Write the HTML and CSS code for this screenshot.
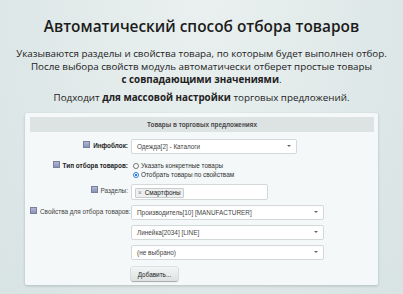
FILE: index.html
```html
<!DOCTYPE html>
<html lang="ru">
<head>
    <meta charset="UTF-8">
    <meta name="viewport" content="width=device-width, initial-scale=1.0">
    <title>Автоматический способ отбора товаров</title>
    <link rel="stylesheet" href="styles.css">
</head>
<body>
    <div class="intro">
        <h1>Автоматический способ отбора товаров</h1>
        <p>Указываются разделы и свойства товара, по которым будет выполнен отбор.<br>
        После выбора свойств модуль автоматически отберет простые товары<br>
        <strong>с совпадающими значениями</strong>.</p>
        <p class="note">Подходит <strong>для массовой настройки</strong> торговых предложений.</p>
    </div>
    <div class="panel">
        <div class="panel-head">Товары в торговых предложениях</div>
        <div class="form">
            <div class="label bold"><span class="mark"></span>Инфоблок:</div>
            <div class="field">
                <div class="select wide">Одежда[2] - Каталоги</div>
            </div>

            <div class="label bold"><span class="mark"></span>Тип отбора товаров:</div>
            <div class="field radios">
                <div class="radio"><span class="dot"></span>Указать конкретные товары</div>
                <div class="radio"><span class="dot on"></span>Отобрать товары по свойствам</div>
            </div>

            <div class="label"><span class="mark"></span>Разделы:</div>
            <div class="field">
                <div class="tags"><span class="tag"><span class="x">×</span>Смартфоны</span></div>
            </div>

            <div class="label"><span class="mark"></span>Свойства для отбора товаров:</div>
            <div class="field stack">
                <div class="select long">Производитель[10] [MANUFACTURER]</div>
                <div class="select long">Линейка[2034] [LINE]</div>
                <div class="select long">(не выбрано)</div>
                <button type="button">Добавить...</button>
            </div>
        </div>
    </div>
</body>
</html>
```

FILE: styles.css
```css
body {
    margin: 0;
    padding: 0;
    height: 294px;
    overflow: hidden;
    font-family: "Open Sans", "Liberation Sans", sans-serif;
    color: #222222;
    background: radial-gradient(ellipse at 50% 0%, #eaf0f0 0%, #dfe8e8 60%, #d8e3e3 100%);
}
.intro {
    text-align: center;
    padding-top: 17px;
}
.intro h1 {
    margin: 0 0 9.5px;
    font-size: 15.4px;
    font-weight: 600;
    line-height: 20px;
    color: #1c1c1c;
}
.intro p {
    margin: 0;
    font-size: 9.8px;
    line-height: 13px;
}
.intro p.note {
    margin-top: 5px;
}
.intro strong {
    font-weight: 700;
}
.panel {
    margin: 9.5px 25px 0;
    width: 353px;
    box-sizing: border-box;
    padding: 4px 4px 4px 5px;
    background: #f4f8f8;
    border-radius: 2px;
    box-shadow: 0 1px 3px rgba(0, 0, 0, 0.18);
    font-family: "Liberation Sans", Arial, sans-serif;
    font-size: 6.4px;
    color: #444444;
}
.panel-head {
    height: 15px;
    line-height: 15px;
    text-align: center;
    background: #dde3e3;
    font-weight: bold;
    color: #4a4a4a;
}
.form {
    display: grid;
    grid-template-columns: 98px 1fr;
    column-gap: 3px;
    row-gap: 5px;
    padding-top: 7px;
}
.label {
    text-align: right;
    padding-top: 1.5px;
    white-space: nowrap;
}
.label.bold {
    font-weight: bold;
    color: #222222;
}
.mark {
    display: inline-block;
    width: 5px;
    height: 5px;
    margin-right: 3px;
    vertical-align: -0.5px;
    background: linear-gradient(#b0b7d3, #8a93b8);
    border: 0.5px solid #77809f;
}
.field {
    min-width: 0;
}
.select {
    position: relative;
    box-sizing: border-box;
    height: 15px;
    line-height: 13px;
    padding: 0 12px 0 5px;
    background: #ffffff;
    border: 1px solid #d3d8d8;
    border-radius: 2px;
    white-space: nowrap;
    overflow: hidden;
}
.select::after {
    content: "";
    position: absolute;
    right: 5px;
    top: 5px;
    border-left: 2px solid transparent;
    border-right: 2px solid transparent;
    border-top: 2px solid #666666;
}
.select.wide {
    width: 166px;
}
.select.long {
    width: 193px;
}
.radios {
    padding-top: 2px;
}
.radio {
    height: 9px;
    line-height: 9px;
    white-space: nowrap;
    color: #333333;
}
.dot {
    display: inline-block;
    box-sizing: border-box;
    width: 6px;
    height: 6px;
    margin: 0 2px 0 2px;
    vertical-align: -0.5px;
    border-radius: 50%;
    border: 1px solid #777777;
    background: #ffffff;
}
.dot.on {
    border-color: #2a7de1;
    background: radial-gradient(circle, #2a7de1 0 45%, #ffffff 55%);
}
.tags {
    box-sizing: border-box;
    width: 137px;
    height: 16px;
    padding: 3px 3px;
    background: #ffffff;
    border: 1px solid #d3d8d8;
    border-radius: 2px;
}
.tag {
    display: inline-block;
    height: 8px;
    line-height: 8px;
    padding: 0 2px;
    background: #eef0f0;
    border: 1px solid #c8cccc;
    border-radius: 1px;
    color: #222222;
}
.tag .x {
    color: #888888;
    margin-right: 3px;
}
.stack {
    display: flex;
    flex-direction: column;
    align-items: flex-start;
    gap: 5px;
}
button {
    margin-top: 2px;
    height: 14px;
    width: 47px;
    padding: 0;
    font-family: "Liberation Sans", Arial, sans-serif;
    font-size: 6.4px;
    color: #222222;
    background: linear-gradient(#f4f6f6, #dde1e1);
    border: none;
    border-radius: 2px;
    box-shadow: 0 1px 1px rgba(0, 0, 0, 0.25), 0 0 0 0.5px #c4c8c8;
}
```
